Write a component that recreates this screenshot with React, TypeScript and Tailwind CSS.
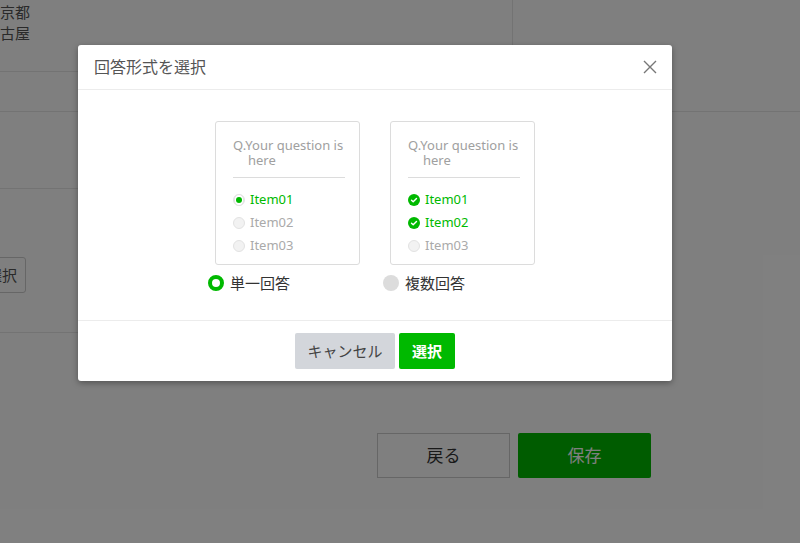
import { useState } from 'react'

const FONT = { fontFamily: '"Noto Sans", "Noto Sans CJK JP", sans-serif' }

type Mode = 'single' | 'multi'

function SmallRadio({ on }: { on: boolean }) {
  return (
    <span className="w-[12px] h-[12px] rounded-full border border-[#e2e2e2] bg-[#f2f2f2] flex items-center justify-center shrink-0">
      {on && <span className="w-[12px] h-[12px] rounded-full bg-white border border-[#e2e2e2] flex items-center justify-center"><span className="w-[6px] h-[6px] rounded-full bg-[#00b900]" /></span>}
    </span>
  )
}

function SmallCheck({ on }: { on: boolean }) {
  if (!on) return <span className="w-[12px] h-[12px] rounded-full border border-[#e2e2e2] bg-[#f2f2f2] shrink-0" />
  return (
    <span className="w-[12px] h-[12px] rounded-full bg-[#00b900] flex items-center justify-center shrink-0">
      <svg width="8" height="8" viewBox="0 0 8 8" fill="none">
        <path d="M1.5 4.2 L3.2 5.8 L6.5 2.4" stroke="white" strokeWidth="1.4" strokeLinecap="round" strokeLinejoin="round" />
      </svg>
    </span>
  )
}

// little preview of how the question will look in each answer mode
function SampleCard({ kind }: { kind: Mode }) {
  const picked = kind === 'single' ? [true, false, false] : [true, true, false]
  return (
    <div className="w-[145px] h-[144px] border border-[#dcdcdc] rounded-[3px] bg-white pl-[17px] pr-[11px] pt-[16px]">
      <div className="text-[13px] leading-[15px] text-[#a0a0a0] whitespace-nowrap">
        <p>Q.Your question is</p>
        <p className="pl-[15px]">here</p>
      </div>
      <div className="h-px bg-[#dcdcdc] mt-[9px] mb-[15px] mr-[3px]" />
      <ul className="space-y-[10px]">
        {['Item01', 'Item02', 'Item03'].map((label, i) => (
          <li key={label} className="flex items-center gap-[5px] h-[13px]">
            {kind === 'single' ? <SmallRadio on={picked[i]} /> : <SmallCheck on={picked[i]} />}
            <span className={`text-[13px] leading-[13px] ${picked[i] ? 'text-[#00b900]' : 'text-[#aaaaaa]'}`}>{label}</span>
          </li>
        ))}
      </ul>
    </div>
  )
}

function BigRadio({ on }: { on: boolean }) {
  return on
    ? <span className="w-[16px] h-[16px] rounded-full border-[4px] border-[#00b900] bg-white shrink-0" />
    : <span className="w-[16px] h-[16px] rounded-full bg-[#dcdcdc] shrink-0" />
}

export default function App() {
  const [mode, setMode] = useState<Mode>('single')

  return (
    <div className="relative w-[800px] h-[543px] overflow-hidden bg-white text-[#555]" style={FONT}>
      {/* page behind the dialog */}
      <div className="h-[112px] border-b border-[#e6e6e6] flex">
        <div className="w-[513px] border-r border-[#e6e6e6]">
          <div className="h-[72px] border-b border-[#e6e6e6] -ml-[15px] pt-[2px] text-[15px] leading-[21px] text-[#555]">
            <p>東京都</p>
            <p>名古屋</p>
          </div>
        </div>
      </div>
      <div className="h-[77px] w-[620px] border-b border-[#e6e6e6]" />
      <div className="h-[144px] w-[620px] border-b border-[#e6e6e6] pt-[68px]">
        <button className="-ml-[40px] w-[66px] h-[36px] border border-[#ccc] rounded-[3px] text-[15px] text-[#555] text-right pr-[8px]">選択</button>
      </div>
      <div className="flex gap-[8px] pl-[377px] pt-[100px]">
        <button className="w-[133px] h-[45px] border border-[#cccccc] bg-white text-[17px] text-[#333]">戻る</button>
        <button className="w-[133px] h-[45px] rounded-[2px] bg-[#00b900] text-[17px] text-white">保存</button>
      </div>

      {/* overlay */}
      <div className="absolute inset-0 bg-black/50" />

      {/* dialog */}
      <div className="absolute left-[78px] top-[45px] w-[594px] bg-white rounded-[3px] shadow-[0_2px_6px_rgba(0,0,0,0.35)]">
        <header className="h-[45px] border-b border-[#ececec] flex items-center justify-between pl-[16px] pr-[14px]">
          <h2 className="text-[16px] text-[#555]">回答形式を選択</h2>
          <button aria-label="閉じる" className="w-[16px] h-[16px] flex items-center justify-center">
            <svg width="14" height="14" viewBox="0 0 14 14" fill="none">
              <path d="M1 1 L13 13 M13 1 L1 13" stroke="#777" strokeWidth="1.4" />
            </svg>
          </button>
        </header>

        <div className="h-[230px] pt-[31px] flex justify-center gap-[30px]">
          {(['single', 'multi'] as Mode[]).map(kind => (
            <div key={kind} className="flex flex-col">
              <SampleCard kind={kind} />
              <button
                type="button"
                onClick={() => setMode(kind)}
                className="mt-[10px] -ml-[7px] flex items-center gap-[6px] h-[16px]"
              >
                <BigRadio on={mode === kind} />
                <span className="text-[15px] text-[#333]">{kind === 'single' ? '単一回答' : '複数回答'}</span>
              </button>
            </div>
          ))}
        </div>

        <footer className="border-t border-[#ececec] pt-[12px] pb-[12px] flex justify-center gap-[4px]">
          <button className="w-[100px] h-[36px] rounded-[2px] bg-[#d3d6db] text-[15px] text-[#444]">キャンセル</button>
          <button className="w-[56px] h-[36px] rounded-[2px] bg-[#00b900] text-[15px] font-bold text-white">選択</button>
        </footer>
      </div>
    </div>
  )
}
